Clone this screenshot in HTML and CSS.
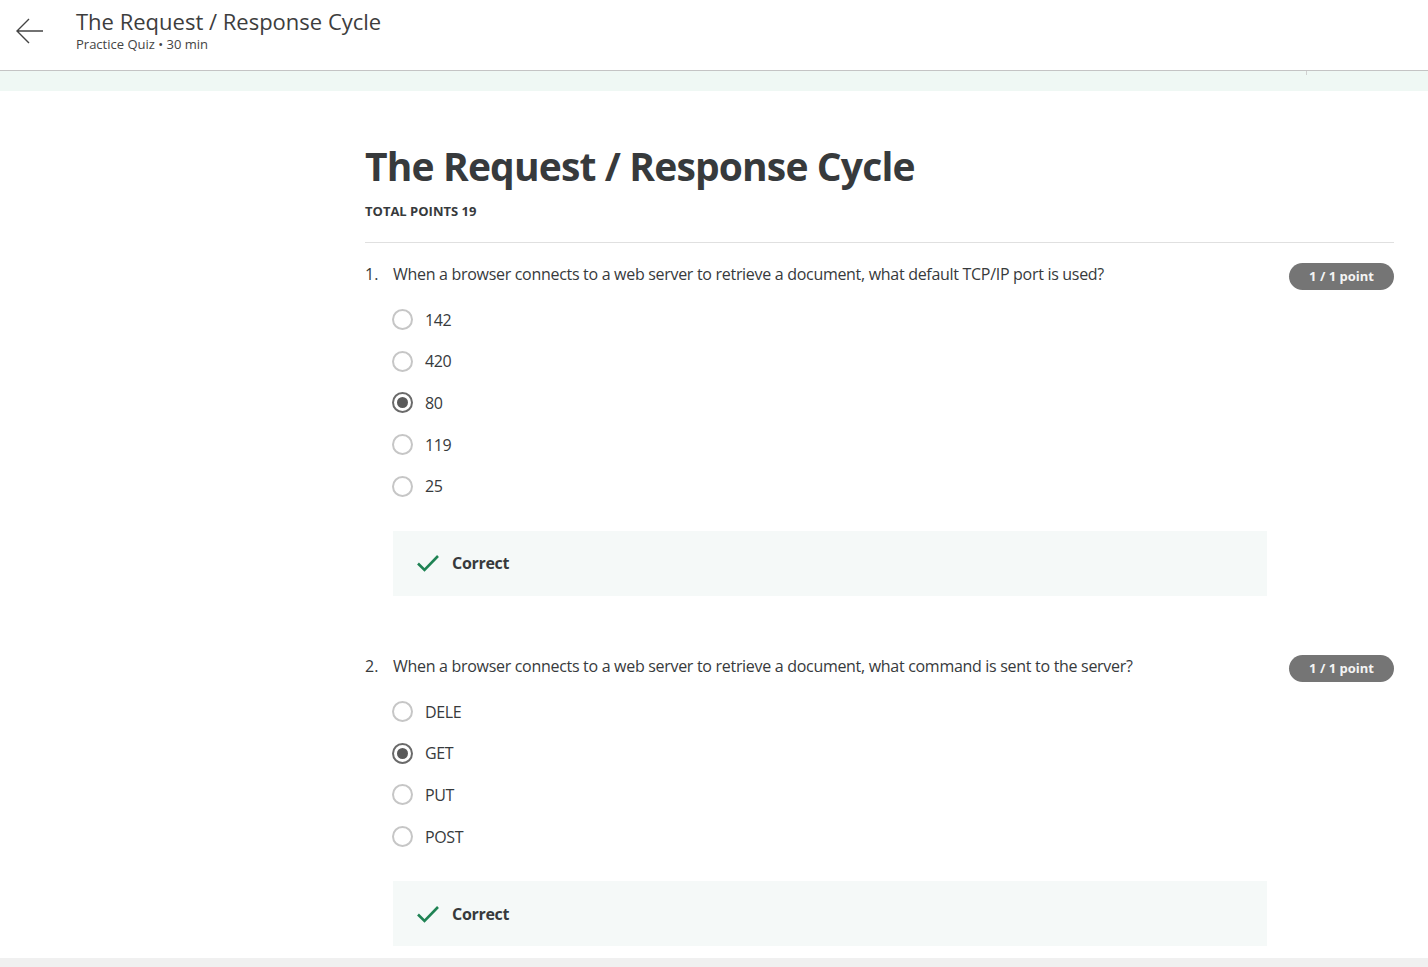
FILE: index.html
```html
<!DOCTYPE html>
<html lang="en">
<head>
<meta charset="utf-8">
<title>The Request / Response Cycle</title>
<link rel="stylesheet" href="styles.css">
</head>
<body>
<header class="topbar">
  <button class="back" aria-label="Back">
    <svg width="30" height="30" viewBox="0 0 30 30"><path d="M28 15H2M14 3L2 15l12 12" fill="none" stroke="#444" stroke-width="1.4"/></svg>
  </button>
  <div class="topbar-text">
    <div class="topbar-title">The Request / Response Cycle</div>
    <div class="topbar-sub">Practice Quiz • 30 min</div>
  </div>
</header>
<div class="band"><span class="tick"></span></div>
<div class="page">
  <aside class="side"></aside>
  <main class="content">
    <h1 class="quiz-title">The Request / Response Cycle</h1>
    <div class="total">TOTAL POINTS 19</div>
    <hr class="divider">

    <section class="question">
      <div class="q-head">
        <span class="q-num">1.</span>
        <span class="q-text">When a browser connects to a web server to retrieve a document, what default TCP/IP port is used?</span>
        <span class="badge">1 / 1 point</span>
      </div>
      <ul class="options">
        <li class="option"><span class="radio"></span>142</li>
        <li class="option"><span class="radio"></span>420</li>
        <li class="option"><span class="radio checked"></span>80</li>
        <li class="option"><span class="radio"></span>119</li>
        <li class="option"><span class="radio"></span>25</li>
      </ul>
      <div class="feedback">
        <svg class="check" width="24" height="20" viewBox="0 0 24 20"><path d="M2 10.5l6.5 6.5L22 3" fill="none" stroke="#1f8354" stroke-width="2.6"/></svg>
        <span>Correct</span>
      </div>
    </section>

    <section class="question">
      <div class="q-head">
        <span class="q-num">2.</span>
        <span class="q-text">When a browser connects to a web server to retrieve a document, what command is sent to the server?</span>
        <span class="badge">1 / 1 point</span>
      </div>
      <ul class="options">
        <li class="option"><span class="radio"></span>DELE</li>
        <li class="option"><span class="radio checked"></span>GET</li>
        <li class="option"><span class="radio"></span>PUT</li>
        <li class="option"><span class="radio"></span>POST</li>
      </ul>
      <div class="feedback">
        <svg class="check" width="24" height="20" viewBox="0 0 24 20"><path d="M2 10.5l6.5 6.5L22 3" fill="none" stroke="#1f8354" stroke-width="2.6"/></svg>
        <span>Correct</span>
      </div>
    </section>
  </main>
</div>
<div class="bottombar"></div>
</body>
</html>
```

FILE: styles.css
```css
* { box-sizing: border-box; }
html, body { margin: 0; padding: 0; }
body {
  font-family: "Open Sans", "Liberation Sans", sans-serif;
  color: #373a3c;
  background: #fff;
  height: 967px;
  overflow: hidden;
  display: flex;
  flex-direction: column;
}
.topbar {
  height: 71px;
  flex: none;
  display: flex;
  align-items: flex-start;
  border-bottom: 1px solid #c4c4c4;
  background: #fff;
}
.back {
  border: 0;
  background: none;
  padding: 0;
  margin: 16px 0 0 15px;
  width: 30px;
  height: 30px;
  cursor: pointer;
}
.back svg { display: block; }
.topbar-text { margin: 6px 0 0 31px; }
.topbar-title {
  font-size: 22px;
  line-height: 30px;
  color: #3d3d3d;
}
.topbar-sub {
  font-size: 13px;
  line-height: 16px;
  color: #444;
}
.band {
  height: 20px;
  flex: none;
  background: #eff8f4;
  position: relative;
}
.tick {
  position: absolute;
  left: 1306px;
  top: 0;
  width: 1px;
  height: 4px;
  background: #d0d0d0;
}
.page {
  flex: 1;
  display: flex;
  overflow: hidden;
}
.side { width: 365px; flex: none; }
.content {
  flex: 1;
  padding: 48px 34px 0 0;
}
.quiz-title {
  margin: 0;
  font-size: 39px;
  line-height: 54px;
  font-weight: 700;
  letter-spacing: -0.85px;
  color: #373a3c;
}
.total {
  margin-top: 9px;
  font-size: 13px;
  line-height: 18px;
  font-weight: 700;
  color: #373a3c;
}
.divider {
  margin: 22px 0 0;
  border: 0;
  border-top: 1px solid #e0e0e0;
}
.question { padding-top: 19px; }
.question + .question { padding-top: 58px; }
.q-head {
  display: flex;
  align-items: flex-start;
  font-size: 16px;
  line-height: 24px;
}
.q-num { width: 28px; flex: none; }
.q-text { flex: 1; letter-spacing: -0.3px; }
.badge {
  flex: none;
  margin-top: 1px;
  width: 105px;
  height: 27px;
  border-radius: 14px;
  background: #757575;
  color: #f4f4f4;
  font-size: 13px;
  font-weight: 700;
  line-height: 27px;
  text-align: center;
}
.options {
  list-style: none;
  margin: 9px 0 0 27px;
  padding: 0;
}
.option {
  display: flex;
  align-items: center;
  height: 41.6px;
  font-size: 16px;
  letter-spacing: -0.4px;
  color: #373a3c;
}
.radio {
  width: 21px;
  height: 21px;
  border: 2px solid #c6c6c6;
  border-radius: 50%;
  margin-right: 12px;
  flex: none;
  display: flex;
  align-items: center;
  justify-content: center;
}
.radio.checked { border-color: #6a6a6a; }
.radio.checked::after {
  content: "";
  width: 11px;
  height: 11px;
  border-radius: 50%;
  background: #5a5a5a;
}
.feedback {
  margin: 24px 127px 0 28px;
  height: 65px;
  background: #f5f9f8;
  display: flex;
  align-items: center;
  padding-left: 23px;
  font-size: 16px;
  font-weight: 700;
  letter-spacing: -0.3px;
  color: #373a3c;
}
.check { margin-right: 12px; flex: none; }
.bottombar {
  height: 9px;
  flex: none;
  background: #f0f0f0;
}
```
